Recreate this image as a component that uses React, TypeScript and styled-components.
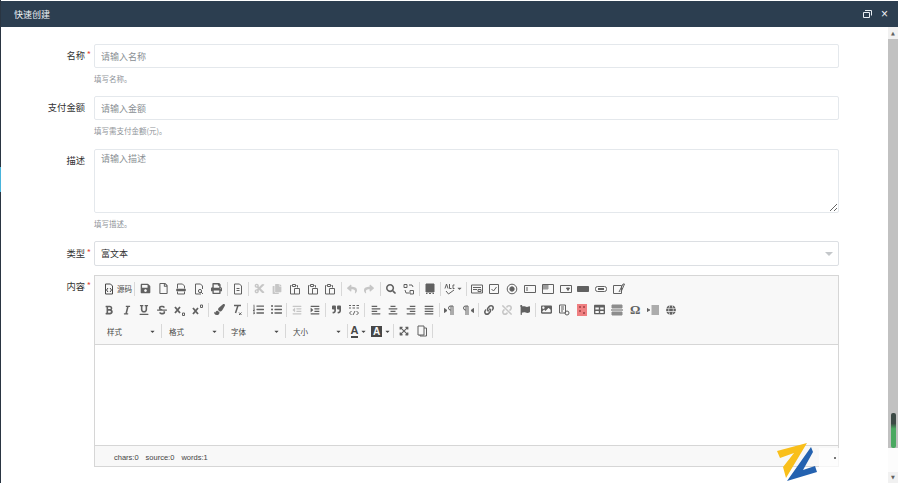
import React from 'react';
import styled, { createGlobalStyle } from 'styled-components';
import {
  FaSave, FaRegFile, FaPrint, FaCut, FaCopy, FaReply, FaShare, FaSearch, FaPaintBrush,
  FaBold, FaItalic, FaUnderline, FaStrikethrough, FaListOl, FaListUl, FaOutdent, FaIndent,
  FaQuoteRight, FaAlignLeft, FaAlignCenter, FaAlignRight, FaAlignJustify, FaLink, FaUnlink,
  FaFlag, FaImage, FaTable, FaGlobe, FaExpandArrowsAlt, FaCaretDown,
} from 'react-icons/fa';

const GlobalStyle = createGlobalStyle`
  html, body { margin: 0; padding: 0; height: 100%; }
  body {
    background: #fff;
    overflow: hidden;
    font-family: "Noto Sans CJK SC", "Liberation Sans", sans-serif;
  }
`;

const OmegaGlyph = styled.span`
  font-family: "Liberation Serif", serif;
  font-size: 13px;
  line-height: 12px;
  font-weight: 700;
`;

const Svg: React.FC<{ children: React.ReactNode }> = ({ children }) => (
  <svg width="12" height="12" viewBox="0 0 12 12" fill="none" stroke="#474747" strokeWidth="1">
    {children}
  </svg>
);

const SourceIcon = () => <Svg><path d="M2.5 1h5l2 2v8h-7zM5 5 3.5 7 5 9M7 5l1.500 2L7 9" /></Svg>;
const PdfIcon = () => <Svg><path d="M2.500 5.500V1h5l2 2v2.500M2.500 8.500V11h7V8.500" /><path d="M1.500 6h9v2h-9z" fill="#474747" strokeWidth=".5" /></Svg>;
const PreviewIcon = () => <Svg><path d="M8 11H2.500V1h5l2 2v3" /><circle cx="7" cy="8" r="1.600" /><path d="m8 9 2 2" /></Svg>;
const TemplateIcon = () => <Svg><path d="M2.500 1h5l2 2v8h-7zM4.500 5.500h3M4.500 7.500h3" /></Svg>;
const PasteIcon = () => <Svg><path d="M2.500 2.500H1.500V11h4M7.500 2.500h1v2M3.500 1.500h3v2h-3z" /><path d="M5.500 5.500h5V11h-5z" /></Svg>;
const ReplaceIcon = () => <Svg><path d="M1 1.500h3v3H1zM7 7.500h3.500V11H7zM6 2h3l1 2M6 10H3L2 7" /></Svg>;
const SelectAllIcon = () => <Svg><path d="M2 1h8v8H2z" fill="#474747" /><path d="M2 10.500h1.500M5 10.500h2M8.500 10.500H10" /></Svg>;
const SpellIcon = () => <Svg><path d="M1 5.500 2.500 1 4 5.500M5.500 1v4.500h2M10.500 2H9v3.500h1.500M2 8l2.500 3L10 7" /></Svg>;
const FormIcon = () => <Svg><path d="M.5 2h11v8H.5z" /><path d="M2 4.500h8M2 6.500h4M7 6.500h3v2H7z" /></Svg>;
const CheckIcon = () => <Svg><path d="M1.500 1.500h9v9h-9zM3.500 6l2 2 3-4" /></Svg>;
const RadioIcon = () => <Svg><circle cx="6" cy="6" r="4.800" /><circle cx="6" cy="6" r="2.200" fill="#474747" /></Svg>;
const TextFieldIcon = () => <Svg><path d="M.5 2.500h11v7H.5zM3 4v4" /></Svg>;
const TextAreaIcon = () => <Svg><path d="M.5 1.500h11v9H.5z" /><path d="M1 2h5v4H1z" fill="#474747" opacity=".6" /></Svg>;
const SelectIcon = () => <Svg><path d="M.5 2.500h11v7H.5z" /><path d="M6.500 5h3L8 7.500z" fill="#474747" /></Svg>;
const ButtonIcon = () => <Svg><path d="M.5 3.500h11v5H.5z" fill="#474747" /></Svg>;
const ImageButtonIcon = () => <Svg><rect x=".5" y="3.500" width="11" height="5" rx="2" /><path d="M3 6h6" strokeWidth="2" /></Svg>;
const HiddenIcon = () => <Svg><path d="M.5 2.500h8v8h-8zM6 9l4-8h1.500L8 9" /></Svg>;
const SubIcon = () => <Svg><path d="m1 3 5 6M6 3 1 9" strokeWidth="1.800" /><path d="M8.500 9h2v2.500h-2z" /></Svg>;
const SupIcon = () => <Svg><path d="m1 4 5 6M6 4l-5 6" strokeWidth="1.800" /><path d="M8.500 1h2v2.500h-2z" /></Svg>;
const EraseIcon = () => <Svg><path d="M3 1.500h7M7 1.500 4.500 9" strokeWidth="1.500" /><path d="M8 8.500l2.500 2.500M10.500 8.500 8 11" /></Svg>;
const DivIcon = () => <Svg><path d="M1 1.500h2M4.500 1.500h2.500M8.500 1.500H11M1 4h2M4.500 4h2.500M8.500 4H11M3.500 7 1.500 9l2 2M8.500 7l2 2-2 2M7 7l-2 4" /></Svg>;
const LtrIcon = () => <Svg><path d="M7 2v9M9 2v9M9 2H6.500a2 2 0 0 0 0 4H7" /><path d="M.5 4.500 3 6.500l-2.500 2z" fill="#474747" /></Svg>;
const RtlIcon = () => <Svg><path d="M4 2v9M6 2v9M6 2H3.500a2 2 0 0 0 0 4H4" /><path d="M11.500 4.500 9 6.500l2.500 2z" fill="#474747" /></Svg>;
const FlashIcon = () => <Svg><path d="M1.500 1h6v8h-6zM3 3h3M3 5h3M3 7h2" /><circle cx="9" cy="9" r="2" /></Svg>;
const RedIcon = () => (
  <svg width="12" height="12" viewBox="0 0 12 12"><path d="M1 0h10v12H1z" fill="#ee6a6d" /><path d="M3 2h2v2H3zM7 2h2v2H7zM3 6h2v2H3zM7 8h2v2H7z" fill="#a83236" /></svg>
);
const HrIcon = () => <Svg><path d="M1 1h10v3H1z" fill="#474747" opacity=".7" /><path d="M0 6h12" /><path d="M1 8h10v3H1z" fill="#474747" opacity=".7" /></Svg>;
const BreakIcon = () => <Svg><path d="M4.500 2H12M4.500 4H12M4.500 6H12M4.500 8H12M4.500 10H12" strokeWidth="1.200" /><path d="M0 4.500 2.800 6 0 7.500z" fill="#474747" /></Svg>;
const BlocksIcon = () => <Svg><path d="M2 1h6v9H2zM8 3h2.500v8H4v-1" /></Svg>;

type Item = { icon: React.ReactNode; dim?: boolean; wide?: boolean };

const rowOne: Item[][] = [
  [{ icon: <FaSave size={11} /> }, { icon: <FaRegFile size={11} /> }, { icon: <PdfIcon /> }, { icon: <PreviewIcon /> }, { icon: <FaPrint size={11} /> }],
  [{ icon: <TemplateIcon /> }],
  [{ icon: <FaCut size={11} />, dim: true }, { icon: <FaCopy size={10} />, dim: true }, { icon: <PasteIcon /> }, { icon: <PasteIcon /> }, { icon: <PasteIcon /> }],
  [{ icon: <FaReply size={10} />, dim: true }, { icon: <FaShare size={10} />, dim: true }],
  [{ icon: <FaSearch size={10} /> }, { icon: <ReplaceIcon /> }],
  [{ icon: <SelectAllIcon /> }],
  [{ icon: <SpellIcon />, wide: true }],
  [
    { icon: <FormIcon /> }, { icon: <CheckIcon /> }, { icon: <RadioIcon /> }, { icon: <TextFieldIcon /> }, { icon: <TextAreaIcon /> },
    { icon: <SelectIcon /> }, { icon: <ButtonIcon /> }, { icon: <ImageButtonIcon /> }, { icon: <HiddenIcon /> },
  ],
];

const rowTwo: Item[][] = [
  [{ icon: <FaBold size={10} /> }, { icon: <FaItalic size={10} /> }, { icon: <FaUnderline size={10} /> }, { icon: <FaStrikethrough size={10} /> }, { icon: <SubIcon /> }, { icon: <SupIcon /> }],
  [{ icon: <FaPaintBrush size={11} /> }, { icon: <EraseIcon /> }],
  [{ icon: <FaListOl size={11} /> }, { icon: <FaListUl size={11} /> }],
  [{ icon: <FaOutdent size={10} />, dim: true }, { icon: <FaIndent size={10} /> }],
  [{ icon: <FaQuoteRight size={9} /> }, { icon: <DivIcon /> }],
  [{ icon: <FaAlignLeft size={10} /> }, { icon: <FaAlignCenter size={10} /> }, { icon: <FaAlignRight size={10} /> }, { icon: <FaAlignJustify size={10} /> }],
  [{ icon: <LtrIcon /> }, { icon: <RtlIcon /> }],
  [{ icon: <FaLink size={10} /> }, { icon: <FaUnlink size={10} />, dim: true }, { icon: <FaFlag size={10} /> }],
  [
    { icon: <FaImage size={11} /> }, { icon: <FlashIcon /> }, { icon: <RedIcon /> }, { icon: <FaTable size={11} /> },
    { icon: <HrIcon /> }, { icon: <OmegaGlyph>Ω</OmegaGlyph> }, { icon: <BreakIcon /> }, { icon: <FaGlobe size={10} /> },
  ],
];

const Groups: React.FC<{ groups: Item[][] }> = ({ groups }) => (
  <>
    {groups.map((group, i) => (
      <React.Fragment key={i}>
        {group.map((item, j) => (
          <ToolButton key={j} $dim={item.dim} $wide={item.wide}>
            {item.icon}
            {item.wide && <FaCaretDown size={7} />}
          </ToolButton>
        ))}
        {i < groups.length - 1 && <Sep />}
      </React.Fragment>
    ))}
  </>
);

export default function App() {
  return (
    <>
      <GlobalStyle />
      <Frame>
        <Edge>
          <EdgeAccent />
        </Edge>
        <Modal>
          <Header>
            <Title>快速创建</Title>
            <HeaderTools>
              <svg width="9" height="8" viewBox="0 0 9 8" fill="none" stroke="#e8edf2" strokeWidth="1">
                <path d="M.5 2.500h6v5h-6zM2 .5h6.500v5" />
              </svg>
              <CloseMark>×</CloseMark>
            </HeaderTools>
          </Header>
          <Main>
            <Content>
              <FieldRow>
                <Label $required>名称</Label>
                <Control>
                  <TextInput placeholder="请输入名称" readOnly />
                  <Help>填写名称。</Help>
                </Control>
              </FieldRow>
              <FieldRow $gap={10}>
                <Label>支付金额</Label>
                <Control>
                  <TextInput placeholder="请输入金额" readOnly />
                  <Help>填写需支付金额(元)。</Help>
                </Control>
              </FieldRow>
              <FieldRow>
                <Label>描述</Label>
                <Control>
                  <TextArea placeholder="请输入描述" readOnly />
                  <Help>填写描述。</Help>
                </Control>
              </FieldRow>
              <FieldRow>
                <Label $required $top={5}>类型</Label>
                <Control>
                  <SelectBox>
                    富文本
                    <SelectCaret />
                  </SelectBox>
                </Control>
              </FieldRow>
              <FieldRow $gap={0}>
                <Label $required>内容</Label>
                <Editor>
                  <Toolbar>
                    <ToolRow>
                      <SourceButton>
                        <SourceIcon />
                        <span>源码</span>
                      </SourceButton>
                      <Sep />
                      <Groups groups={rowOne} />
                    </ToolRow>
                    <ToolRow>
                      <Groups groups={rowTwo} />
                    </ToolRow>
                    <ToolRow>
                      {['样式', '格式', '字体', '大小'].map((name) => (
                        <React.Fragment key={name}>
                          <Combo>
                            {name}
                            <FaCaretDown size={7} />
                          </Combo>
                          <ComboSep />
                        </React.Fragment>
                      ))}
                      <ColorButton>
                        <ColorA>A</ColorA>
                        <FaCaretDown size={7} />
                      </ColorButton>
                      <ColorButton>
                        <ColorB>A</ColorB>
                        <FaCaretDown size={7} />
                      </ColorButton>
                      <Sep />
                      <ToolButton><FaExpandArrowsAlt size={10} /></ToolButton>
                      <ToolButton><BlocksIcon /></ToolButton>
                      <Sep />
                    </ToolRow>
                  </Toolbar>
                  <EditArea />
                  <StatusBar>
                    <span>chars:0</span>
                    <span>source:0</span>
                    <span>words:1</span>
                  </StatusBar>
                </Editor>
              </FieldRow>
            </Content>
            <ScrollRail>
              <ScrollArrow>▲</ScrollArrow>
              <ScrollThumb />
              <ScrollArrow>▼</ScrollArrow>
              <Meter />
            </ScrollRail>
          </Main>
        </Modal>
        <Watermark>
          <svg width="45" height="42" viewBox="0 0 45 42">
            <path d="M2 9 32 1 11 36 8 25 19 11 5 16z" fill="#f9bf1b" />
            <path d="M36 5l2 5-10 18 12-4 2 6-30 9z" fill="#2462b0" />
          </svg>
          <Fade />
          <Grip />
        </Watermark>
      </Frame>
    </>
  );
}

const Frame = styled.div`
  position: relative;
  display: flex;
  width: 900px;
  height: 483px;
  overflow: hidden;
  background: #fff;
`;

const Edge = styled.div`
  flex: 0 0 1px;
  padding-top: 167px;
  background: #2a3542;
`;

const EdgeAccent = styled.div`
  height: 25px;
  background: #49b4dc;
`;

const Modal = styled.div`
  display: flex;
  flex-direction: column;
  width: 897px;
  background: #fff;
`;

const Header = styled.div`
  flex: 0 0 26px;
  margin-top: 1px;
  display: flex;
  align-items: center;
  justify-content: space-between;
  padding: 0 10px 0 13px;
  background: #2c3e50;
  color: #eef2f5;
`;

const Title = styled.div`
  font-size: 9px;
`;

const HeaderTools = styled.div`
  display: flex;
  align-items: center;
  gap: 9px;
`;

const CloseMark = styled.span`
  font-family: "Liberation Sans", sans-serif;
  font-size: 12px;
  line-height: 12px;
`;

const Main = styled.div`
  flex: 1;
  display: flex;
  min-height: 0;
`;

const Content = styled.div`
  flex: 1;
  padding-top: 17px;
`;

const FieldRow = styled.div<{ $gap?: number }>`
  display: flex;
  margin-bottom: ${(p) => p.$gap ?? 9}px;
`;

const Label = styled.div<{ $required?: boolean; $top?: number }>`
  position: relative;
  flex: 0 0 84px;
  height: 14px;
  margin-right: 9px;
  padding-top: ${(p) => p.$top ?? 4}px;
  text-align: right;
  font-size: 9.300px;
  line-height: 14px;
  color: #333;

  ${(p) =>
    p.$required &&
    `&::after {
      content: '*';
      position: absolute;
      right: -6px;
      top: ${(p.$top ?? 4) + 0}px;
      color: #e74c3c;
      font-size: 9px;
      line-height: 14px;
    }`}
`;

const Control = styled.div`
  width: 745px;
`;

const fieldBase = `
  display: block;
  box-sizing: border-box;
  width: 100%;
  border: 1px solid #e4e8ec;
  border-radius: 2px;
  padding: 0 6px;
  font-family: "Noto Sans CJK SC", "Liberation Sans", sans-serif;
  font-size: 9px;
  color: #333;
  outline: none;
  background: #fff;
  &::placeholder { color: #8a8f94; opacity: 1; }
`;

const TextInput = styled.input`
  ${fieldBase}
  height: 24px;
`;

const TextArea = styled.textarea`
  ${fieldBase}
  height: 64px;
  padding-top: 2px;
  line-height: 13px;
  resize: vertical;
`;

const Help = styled.div`
  height: 19px;
  padding-top: 5px;
  box-sizing: border-box;
  font-size: 7.500px;
  line-height: 11px;
  color: #8f9499;
`;

const SelectBox = styled.div`
  position: relative;
  box-sizing: border-box;
  height: 25px;
  border: 1px solid #dcdfe3;
  border-radius: 2px;
  padding: 0 6px;
  font-size: 9px;
  line-height: 24px;
  color: #333;
`;

const SelectCaret = styled.i`
  position: absolute;
  right: 5px;
  top: 10px;
  width: 0;
  height: 0;
  border-left: 4px solid transparent;
  border-right: 4px solid transparent;
  border-top: 4px solid #c4c7ca;
`;

const Editor = styled.div`
  width: 745px;
  box-sizing: border-box;
  height: 192px;
  border: 1px solid #d6d6d6;
  display: flex;
  flex-direction: column;
`;

const Toolbar = styled.div`
  flex: 0 0 69px;
  box-sizing: border-box;
  padding: 2px 0 0 5px;
  background: #f8f8f8;
  border-bottom: 1px solid #d6d6d6;
`;

const ToolRow = styled.div`
  display: flex;
  align-items: center;
  height: 21.300px;
`;

const ToolButton = styled.span<{ $dim?: boolean; $wide?: boolean }>`
  flex: 0 0 ${(p) => (p.$wide ? 22 : 17.8)}px;
  display: flex;
  align-items: center;
  justify-content: center;
  color: #474747;
  opacity: ${(p) => (p.$dim ? 0.28 : 0.85)};
`;

const Sep = styled.span`
  flex: 0 0 1px;
  height: 14px;
  margin: 0 1.250px;
  background: #d8d8d8;
`;

const SourceButton = styled.span`
  flex: 0 0 33px;
  display: flex;
  align-items: center;
  gap: 2px;
  padding-left: 3px;
  box-sizing: border-box;
  font-size: 7.500px;
  color: #474747;
`;

const Combo = styled.span`
  flex: 0 0 61px;
  box-sizing: border-box;
  display: flex;
  align-items: center;
  justify-content: space-between;
  padding: 0 5px 0 7px;
  font-size: 7.500px;
  color: #474747;
`;

const ComboSep = styled.span`
  flex: 0 0 1px;
  height: 14px;
  background: #d8d8d8;
`;

const ColorButton = styled.span`
  flex: 0 0 22px;
  display: flex;
  align-items: center;
  justify-content: center;
  gap: 2px;
  color: #474747;
`;

const ColorA = styled.span`
  font-family: "Liberation Sans", sans-serif;
  font-size: 11px;
  font-weight: 700;
  line-height: 12px;
  border-bottom: 2px solid #474747;
`;

const ColorB = styled.span`
  font-family: "Liberation Sans", sans-serif;
  font-size: 10px;
  font-weight: 700;
  line-height: 11px;
  padding: 0 2px;
  color: #f8f8f8;
  background: #474747;
`;

const EditArea = styled.div`
  flex: 1;
  background: #fff;
`;

const StatusBar = styled.div`
  flex: 0 0 21px;
  box-sizing: border-box;
  display: flex;
  align-items: center;
  gap: 7px;
  padding: 2px 0 0 19px;
  background: #f8f8f8;
  border-top: 1px solid #d6d6d6;
  font-family: "Liberation Sans", sans-serif;
  font-size: 7.500px;
  color: #444;
`;

const ScrollRail = styled.div`
  position: relative;
  flex: 0 0 10px;
  display: flex;
  flex-direction: column;
  background: #f1f1f1;
`;

const ScrollArrow = styled.div`
  flex: 0 0 12px;
  text-align: center;
  font-size: 5px;
  line-height: 12px;
  color: #606060;
  font-family: "DejaVu Sans", sans-serif;
`;

const ScrollThumb = styled.div`
  flex: 1;
  margin-bottom: 23px;
  background: #c1c1c1;
`;

const Meter = styled.div`
  position: absolute;
  left: 3px;
  top: 386px;
  width: 5px;
  height: 35px;
  border-radius: 2px;
  background: linear-gradient(#3b4a45 0 30%, #4aa860 45%, #4aa860 100%);
`;

const Watermark = styled.div`
  position: absolute;
  left: 775px;
  top: 442px;
  width: 123px;
  height: 41px;
`;

const Fade = styled.div`
  position: absolute;
  left: 44px;
  top: 6px;
  width: 79px;
  height: 24px;
  background: rgba(255, 255, 255, 0.75);
`;

const Grip = styled.div`
  position: absolute;
  left: 59px;
  top: 15px;
  width: 2px;
  height: 2px;
  background: #777;
`;
